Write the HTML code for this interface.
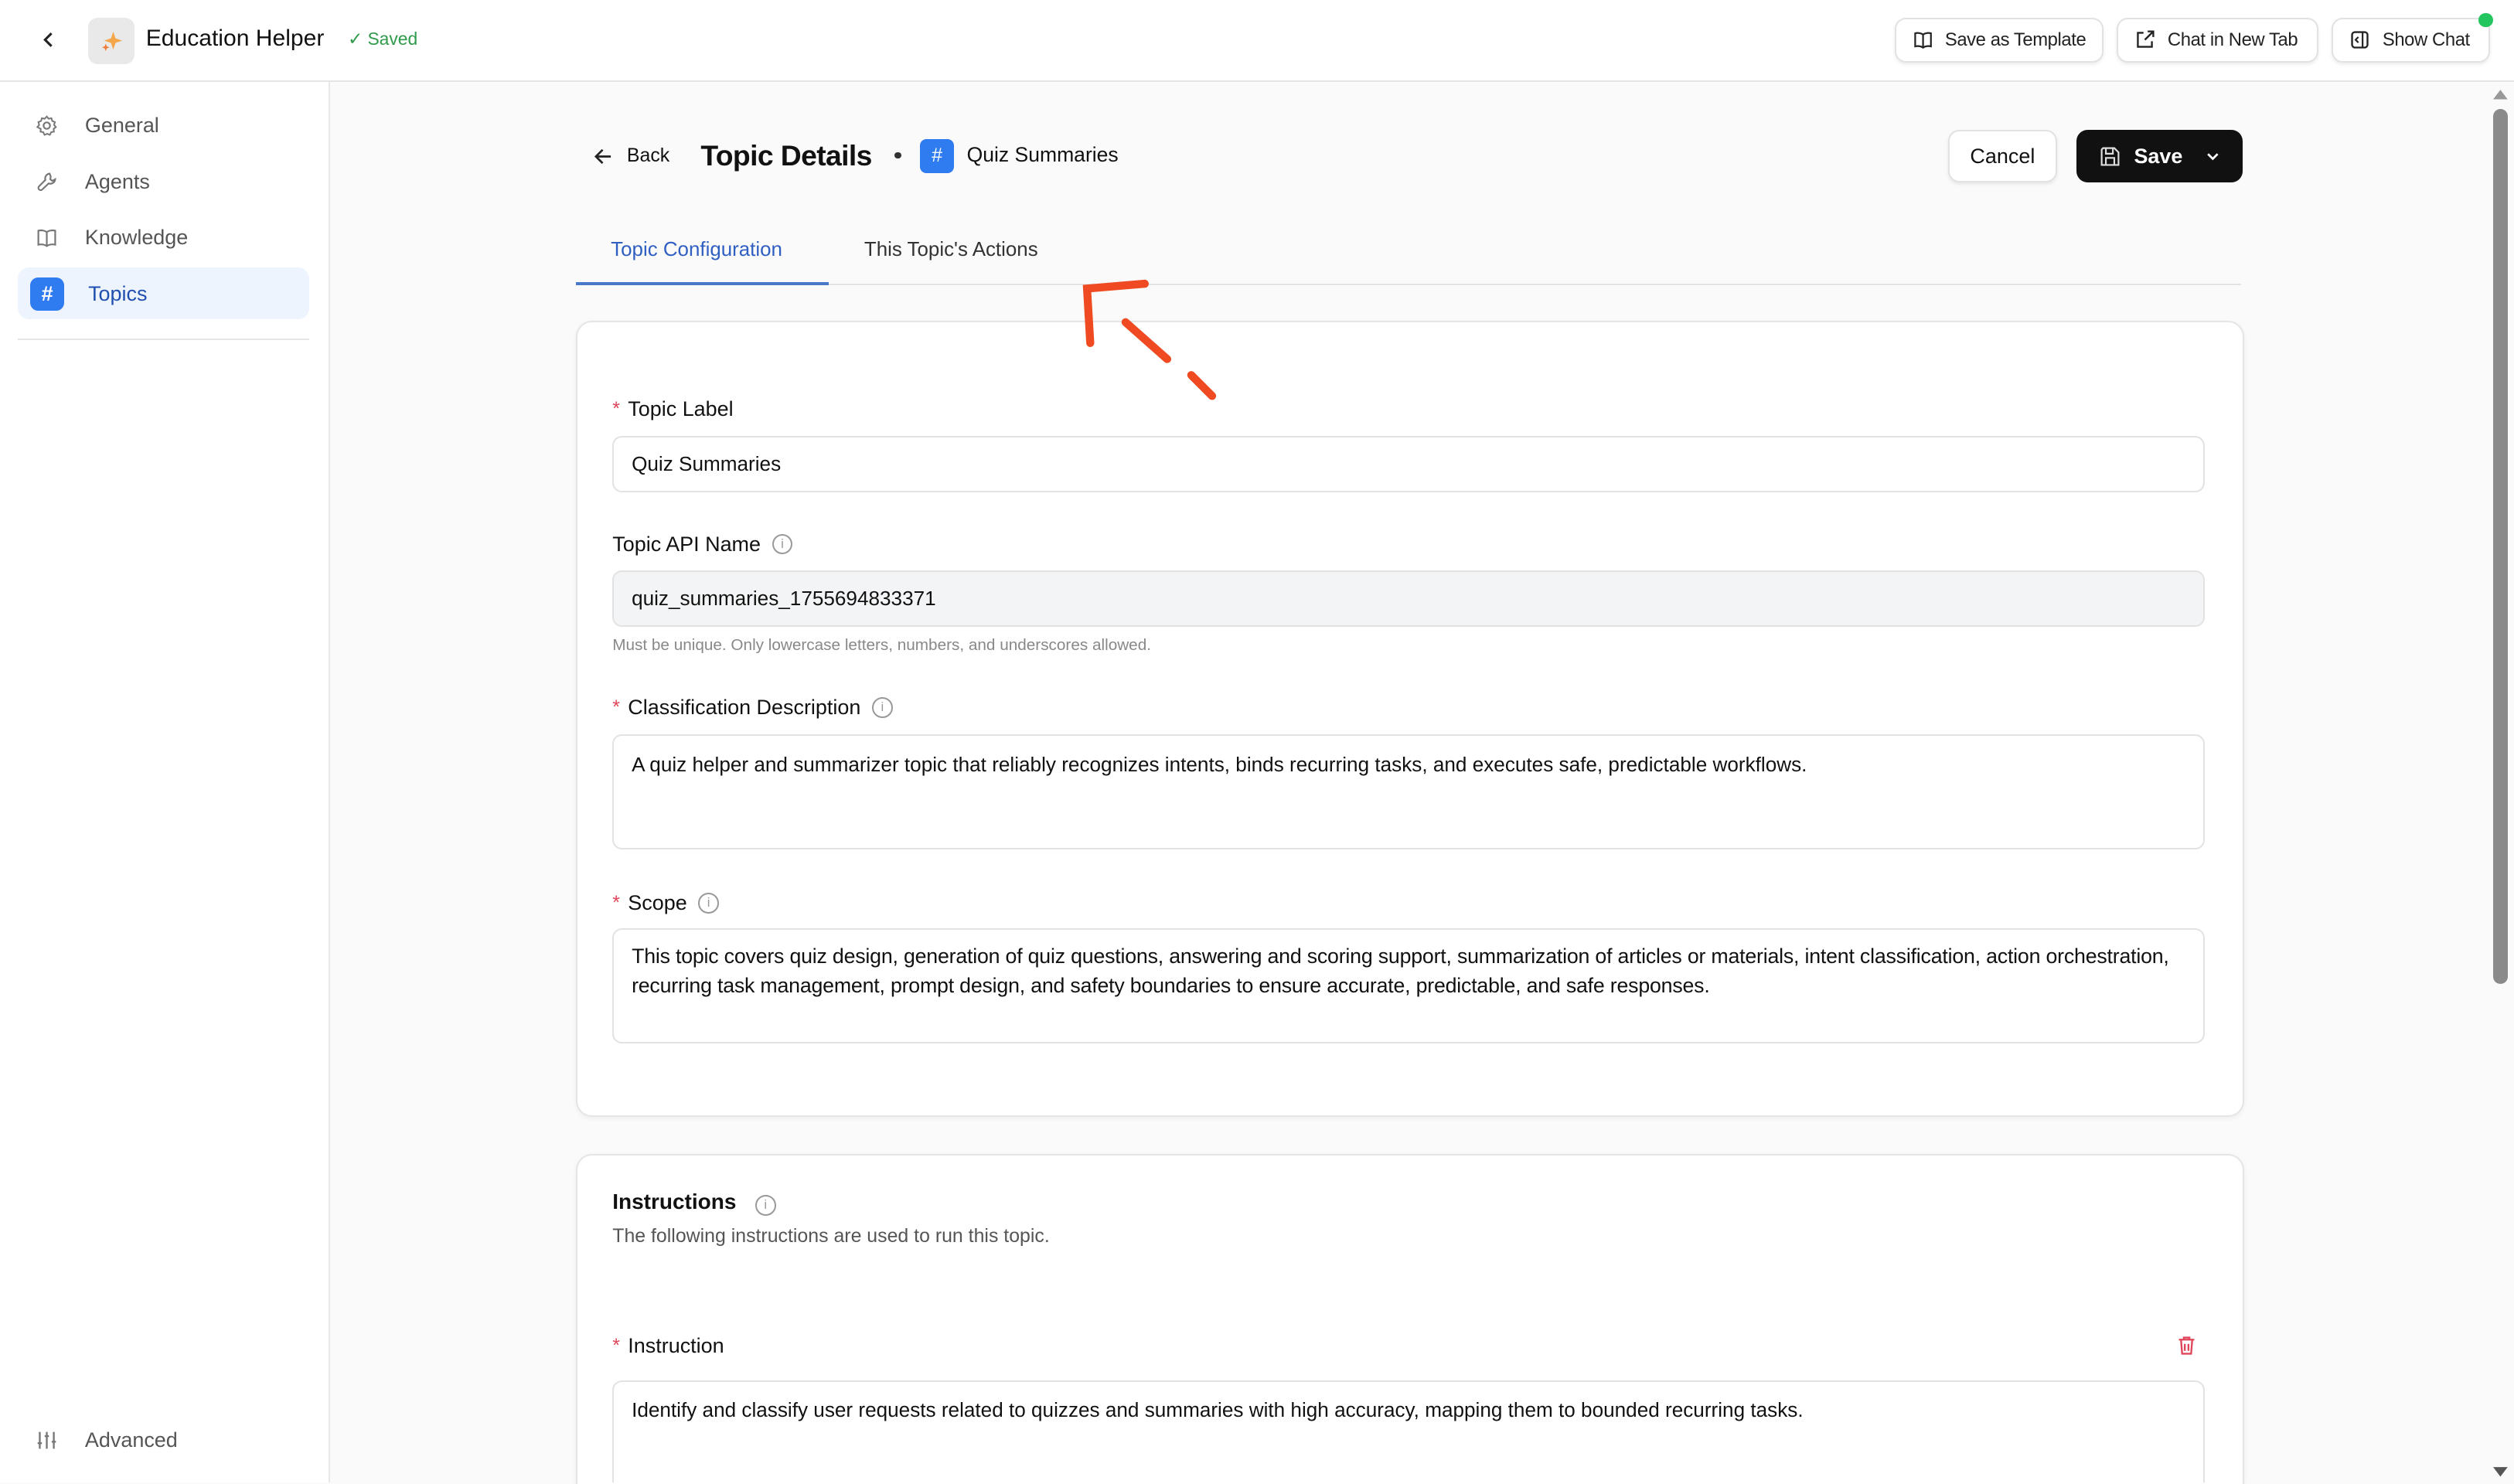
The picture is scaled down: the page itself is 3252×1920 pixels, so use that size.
<!DOCTYPE html>
<html><head><meta charset="utf-8"><style>
html{zoom:2.07398;overflow:hidden}
body{margin:0;width:1568px;height:925.7px;overflow:hidden;background:#fafafa;font-family:"Liberation Sans",sans-serif;color:#111;position:relative}
.a{position:absolute}
.top{left:0;top:0;width:1568px;height:50px;background:#fff;border-bottom:1px solid #e5e5e5}
.btn{position:absolute;top:11px;height:28px;border:1px solid #e2e2e2;border-radius:7px;background:#fff;box-shadow:0 1px 2px rgba(0,0,0,.08);font-size:11.5px;display:flex;align-items:center;gap:7px;padding:0 10px;box-sizing:border-box;color:#222;white-space:nowrap;letter-spacing:-.2px}
.side{left:0;top:51px;width:205px;height:874px;background:#fff;border-right:1px solid #e8e8e8}
.nav{position:absolute;left:22px;font-size:13px;color:#555;display:flex;align-items:center;gap:17px}
.card{position:absolute;left:359px;width:1039px;background:#fff;border:1px solid #e5e5e5;border-radius:10px;box-shadow:0 1px 3px rgba(0,0,0,.05)}
.lbl{position:absolute;left:382px;font-size:13px;color:#111;display:flex;align-items:center;gap:4px}
.req{color:#e0455a;font-size:12px;margin-right:1px}
.inp{position:absolute;left:382px;width:993px;border:1px solid #e2e2e2;border-radius:6px;background:#fff;box-sizing:border-box;font-size:12.6px;padding:0 11px;color:#111}
.info{display:inline-block;width:11px;height:11px;border:1px solid #999;border-radius:50%;font-size:8px;color:#999;text-align:center;line-height:11px;margin-left:3px;font-weight:normal}
</style></head><body>
<div class="a top"></div>
<svg class="a" style="left:24px;top:19px" width="12" height="12" viewBox="0 0 12 12"><path d="M8 2 4 6l4 4" fill="none" stroke="#222" stroke-width="1.5"/></svg>
<div class="a" style="left:55px;top:11px;width:29px;height:29px;background:#e9e9e9;border-radius:6px"></div>
<svg class="a" style="left:62px;top:18px" width="15" height="15" viewBox="0 0 16 16"><path d="M9 2 10.5 6.5 15 8 10.5 9.5 9 14 7.5 9.5 3 8 7.5 6.5z" fill="#f5a54a"/><path d="M4 10l.7 1.8 1.8.7-1.8.7L4 15l-.7-1.8-1.8-.7 1.8-.7z" fill="#ee7d3a"/></svg>
<div class="a" style="left:91px;top:16px;font-size:14.5px;color:#111">Education Helper</div>
<div class="a" style="left:217px;top:18px;font-size:11px;color:#2f9a4a">✓ Saved</div>
<div class="btn" style="left:1182px;width:130px"><svg width="14" height="14" viewBox="0 0 16 16"><path d="M8 4C6.5 2.8 4 2.5 2 3v10c2-.5 4.5-.2 6 1 1.5-1.2 4-1.5 6-1V3c-2-.5-4.5-.2-6 1zm0 0v10" fill="none" stroke="#222" stroke-width="1.3"/></svg>Save as Template</div>
<div class="btn" style="left:1320px;width:126px"><svg width="14" height="14" viewBox="0 0 16 16"><path d="M13 9v4H3V3h4M10 2h4v4M14 2 8 8" fill="none" stroke="#222" stroke-width="1.3"/></svg>Chat in New Tab</div>
<div class="btn" style="left:1454px;width:99px"><svg width="14" height="14" viewBox="0 0 16 16"><rect x="2.5" y="2.5" width="11" height="11" rx="2" fill="none" stroke="#222" stroke-width="1.3"/><path d="M10 3v10M7 6 5 8l2 2" fill="none" stroke="#222" stroke-width="1.2"/></svg>Show Chat</div>
<div class="a" style="left:1546px;top:8px;width:9px;height:9px;border-radius:50%;background:#22c55e"></div>

<div class="a side"></div>
<div class="nav" style="top:71px"><svg width="14" height="14" viewBox="0 0 16 16"><circle cx="8" cy="8" r="2.3" fill="none" stroke="#777" stroke-width="1.2"/><path d="M8 1.5l1.3 1.6 2-.4.6 2 1.9.8-.6 2 1.3 1.5-1.6 1.3.2 2-2 .4-.9 1.9-1.9-.8-1.9.8-.9-1.9-2-.4.2-2L1.3 9l1.3-1.5-.6-2 1.9-.8.6-2 2 .4z" fill="none" stroke="#777" stroke-width="1.1"/></svg>General</div>
<div class="nav" style="top:106px"><svg width="14" height="14" viewBox="0 0 16 16"><path d="M10 2a3.5 3.5 0 0 0-3 4.5L2.5 11a1.6 1.6 0 0 0 2.3 2.3L9.3 9A3.5 3.5 0 0 0 14 6l-2 1.2L10.5 6 10.8 4z" fill="none" stroke="#777" stroke-width="1.2"/></svg>Agents</div>
<div class="nav" style="top:141px"><svg width="14" height="14" viewBox="0 0 16 16"><path d="M8 4C6.5 2.8 4 2.5 2 3v10c2-.5 4.5-.2 6 1 1.5-1.2 4-1.5 6-1V3c-2-.5-4.5-.2-6 1zm0 0v10" fill="none" stroke="#777" stroke-width="1.2"/></svg>Knowledge</div>
<div class="a" style="left:11px;top:167px;width:182px;height:32px;background:#eef4fd;border-radius:7px"></div>
<div class="a" style="left:19px;top:173px;width:21px;height:21px;background:#2f7bf0;border-radius:5px;color:#fff;font-size:13px;text-align:center;line-height:21px;font-weight:bold">#</div>
<div class="a" style="left:55px;top:176px;font-size:13px;color:#1f4fb0">Topics</div>
<div class="a" style="left:11px;top:211px;width:182px;height:1px;background:#e5e5e5"></div>
<div class="nav" style="top:891px"><svg width="14" height="14" viewBox="0 0 16 16"><path d="M3 2v12M8 2v12M13 2v12M1.5 10h3M6.5 5h3M11.5 9h3" fill="none" stroke="#777" stroke-width="1.3"/></svg>Advanced</div>

<svg class="a" style="left:370px;top:91px" width="13" height="13" viewBox="0 0 14 14"><path d="M12 7H2M6.5 2.5 2 7l4.5 4.5" fill="none" stroke="#222" stroke-width="1.4"/></svg>
<div class="a" style="left:391px;top:90px;font-size:12px">Back</div>
<div class="a" style="left:437px;top:87px;font-size:18px;font-weight:bold;letter-spacing:-.3px">Topic Details</div>
<div class="a" style="left:558px;top:95px;width:4px;height:4px;border-radius:50%;background:#333"></div>
<div class="a" style="left:574px;top:87px;width:21px;height:21px;background:#2f7bf0;border-radius:4px;color:#fff;font-size:12px;text-align:center;line-height:21px">#</div>
<div class="a" style="left:603px;top:89px;font-size:12.8px">Quiz Summaries</div>
<div class="a" style="left:1215px;top:81px;width:68px;height:33px;border:1px solid #e2e2e2;border-radius:7px;background:#fff;box-sizing:border-box;font-size:13px;text-align:center;line-height:31px;box-shadow:0 1px 2px rgba(0,0,0,.08)">Cancel</div>
<div class="a" style="left:1295px;top:81px;width:104px;height:33px;background:#111;border-radius:7px;color:#fff;font-size:13px;font-weight:bold;display:flex;align-items:center;padding-left:14px;box-sizing:border-box;gap:8px"><svg width="14" height="14" viewBox="0 0 16 16"><path d="M3 2h8l3 3v9H2V3zM5 2v4h5V2M5 14V9h6v5" fill="none" stroke="#ddd" stroke-width="1.2"/></svg>Save<svg style="margin-left:6px" width="10" height="10" viewBox="0 0 10 10"><path d="M2 3.5 5 6.5 8 3.5" fill="none" stroke="#fff" stroke-width="1.3"/></svg></div>

<div class="a" style="left:381px;top:149px;font-size:12.5px;color:#2f5fc0">Topic Configuration</div>
<div class="a" style="left:539px;top:149px;font-size:12.5px;color:#333">This Topic's Actions</div>
<div class="a" style="left:359px;top:177px;width:1039px;height:1px;background:#e3e3e3"></div>
<div class="a" style="left:359px;top:176px;width:158px;height:2px;background:#4a78c8"></div>

<div class="card" style="top:200px;height:495px"></div>
<div class="lbl" style="top:248px"><span class="req">*</span>Topic Label</div>
<div class="inp" style="top:272px;height:35px;line-height:33px">Quiz Summaries</div>
<div class="lbl" style="top:332px">Topic API Name<span class="info">i</span></div>
<div class="inp" style="top:356px;height:35px;line-height:33px;background:#f3f4f5">quiz_summaries_1755694833371</div>
<div class="a" style="left:382px;top:397px;font-size:10px;color:#888">Must be unique. Only lowercase letters, numbers, and underscores allowed.</div>
<div class="lbl" style="top:434px"><span class="req">*</span>Classification Description<span class="info">i</span></div>
<div class="inp" style="top:458px;height:72px;padding-top:10px;line-height:16px">A quiz helper and summarizer topic that reliably recognizes intents, binds recurring tasks, and executes safe, predictable workflows.</div>
<div class="lbl" style="top:556px"><span class="req">*</span>Scope<span class="info">i</span></div>
<div class="inp" style="top:579px;height:72px;padding-top:8px;line-height:18px;font-size:12.9px;white-space:nowrap;letter-spacing:-.1px">This topic covers quiz design, generation of quiz questions, answering and scoring support, summarization of articles or materials, intent classification, action orchestration,<br>recurring task management, prompt design, and safety boundaries to ensure accurate, predictable, and safe responses.</div>

<div class="card" style="top:720px;height:205px;border-bottom:none;border-radius:10px 10px 0 0"></div>
<div class="a" style="left:382px;top:742px;font-size:13.5px;font-weight:bold">Instructions <span class="info" style="margin-left:8px">i</span></div>
<div class="a" style="left:382px;top:764px;font-size:12px;color:#555">The following instructions are used to run this topic.</div>
<div class="lbl" style="top:832px"><span class="req">*</span>Instruction</div>
<svg class="a" style="left:1357px;top:832px" width="14" height="14" viewBox="0 0 16 16"><path d="M2.5 4h11M6 4V2.5h4V4M4 4l.8 10h6.4L12 4M6.7 7v5M9.3 7v5" fill="none" stroke="#e0455a" stroke-width="1.3"/></svg>
<div class="inp" style="top:861px;height:64px;padding-top:10px;line-height:16px;border-bottom:none;border-radius:6px 6px 0 0">Identify and classify user requests related to quizzes and summaries with high accuracy, mapping them to bounded recurring tasks.</div>

<div class="a" style="left:1555px;top:68px;width:9px;height:546px;background:#8a8a8a;border-radius:5px"></div>
<svg class="a" style="left:1554px;top:55px" width="11" height="8"><path d="M1 7 5.5 1 10 7z" fill="#999"/></svg>
<svg class="a" style="left:1554px;top:914px" width="11" height="8"><path d="M1 1 5.5 7 10 1z" fill="#555"/></svg>

<svg class="a" style="left:0;top:0" width="1568" height="925"><g stroke="#ef4a22" stroke-width="5" stroke-linecap="round" fill="none"><path d="M714 177 678 180 680 214"/><path d="M702 201 728 224"/><path d="M743 234 756 247"/></g></svg>
</body></html>
